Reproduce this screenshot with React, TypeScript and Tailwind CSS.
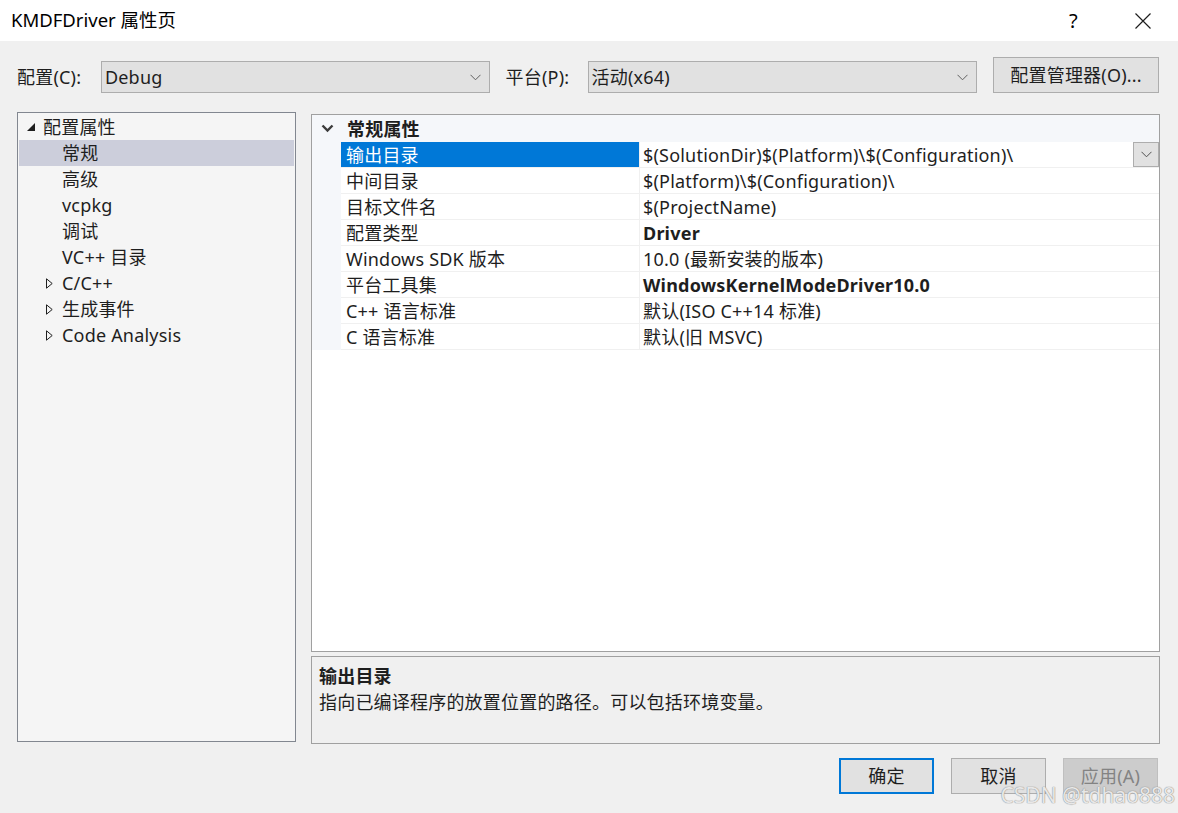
import * as React from "react";

const rows: [string, string, boolean][] = [
  ["输出目录", "$(SolutionDir)$(Platform)\\$(Configuration)\\", false],
  ["中间目录", "$(Platform)\\$(Configuration)\\", false],
  ["目标文件名", "$(ProjectName)", false],
  ["配置类型", "Driver", true],
  ["Windows SDK 版本", "10.0 (最新安装的版本)", false],
  ["平台工具集", "WindowsKernelModeDriver10.0", true],
  ["C++ 语言标准", "默认(ISO C++14 标准)", false],
  ["C 语言标准", "默认(旧 MSVC)", false],
];

const tree: { label: string; level: 0 | 1; mark?: "open" | "closed"; selected?: boolean }[] = [
  { label: "配置属性", level: 0, mark: "open" },
  { label: "常规", level: 1, selected: true },
  { label: "高级", level: 1 },
  { label: "vcpkg", level: 1 },
  { label: "调试", level: 1 },
  { label: "VC++ 目录", level: 1 },
  { label: "C/C++", level: 1, mark: "closed" },
  { label: "生成事件", level: 1, mark: "closed" },
  { label: "Code Analysis", level: 1, mark: "closed" },
];

function ComboChevron() {
  return (
    <svg width="11" height="7" viewBox="0 0 11 7" className="shrink-0">
      <path d="M0.5 0.8 L5.5 5.8 L10.5 0.8" fill="none" stroke="#606060" strokeWidth="1" />
    </svg>
  );
}

function Combo({ value, className }: { value: string; className: string }) {
  return (
    <div
      className={
        "flex h-[32px] items-center justify-between border border-[#adadad] bg-[#e1e1e1] pl-[3px] pr-[8px] " +
        className
      }
    >
      <span>{value}</span>
      <ComboChevron />
    </div>
  );
}

function TreeItem({ item }: { item: (typeof tree)[number] }) {
  return (
    <div
      className={
        "flex h-[26px] items-center " + (item.selected ? "bg-[#cccedb]" : "")
      }
    >
      {item.level === 0 ? (
        <>
          <span className="flex w-[24px] justify-end pr-[8px]">
            <svg width="8" height="8" viewBox="0 0 8 8">
              <path d="M8 0 L8 8 L0 8 Z" fill="#1e1e1e" />
            </svg>
          </span>
          <span>{item.label}</span>
        </>
      ) : (
        <>
          <span className="flex w-[43px] justify-end pr-[9px]">
            {item.mark === "closed" && (
              <svg width="7" height="11" viewBox="0 0 7 11">
                <path d="M0.5 0.8 L6.2 5.5 L0.5 10.2 Z" fill="none" stroke="#1e1e1e" strokeWidth="1" />
              </svg>
            )}
          </span>
          <span>{item.label}</span>
        </>
      )}
    </div>
  );
}

function DialogButton({
  label,
  kind,
}: {
  label: string;
  kind: "default" | "normal" | "disabled";
}) {
  const cls =
    kind === "default"
      ? "border-2 border-[#0078d7] bg-[#e1e1e1] text-[#1e1e1e]"
      : kind === "normal"
        ? "border border-[#adadad] bg-[#e1e1e1] text-[#1e1e1e]"
        : "border border-[#bfbfbf] bg-[#cccccc] text-[#838383]";
  return (
    <div className={"flex h-[36px] w-[95px] items-center justify-center " + cls}>
      {label}
    </div>
  );
}

export default function App() {
  return (
    <div className="relative flex h-[813px] w-[1178px] flex-col overflow-hidden bg-[#f0f0f0] font-['Noto_Sans','Noto_Sans_CJK_SC',sans-serif] text-[18px] leading-none tracking-[0.2px] text-[#1e1e1e]">
      {/* title bar */}
      <div className="flex h-[41px] shrink-0 items-center justify-between bg-white pl-[11px] pr-[27px]">
        <span className="text-[18.5px] tracking-normal text-black">KMDFDriver 属性页</span>
        <div className="flex items-center gap-[57px] text-black">
          <span className="text-[20px]">?</span>
          <svg width="16" height="16" viewBox="0 0 16 16">
            <path d="M0.5 0.5 L15.5 15.5 M15.5 0.5 L0.5 15.5" stroke="#1e1e1e" strokeWidth="1.2" />
          </svg>
        </div>
      </div>

      {/* configuration row */}
      <div className="flex items-end pl-[17px] pr-[19px] pt-[16px]">
        <div className="flex h-[32px] w-[84px] items-center">配置(C):</div>
        <Combo value="Debug" className="w-[389px]" />
        <div className="flex h-[32px] w-[98px] items-center pl-[16px]">平台(P):</div>
        <Combo value="活动(x64)" className="w-[390px]" />
        <div className="ml-[16px] flex h-[36px] w-[166px] items-center justify-center border border-[#adadad] bg-[#e1e1e1]">
          配置管理器(O)...
        </div>
      </div>

      {/* main panels */}
      <div className="mt-[19px] flex gap-[15px] pl-[17px] pr-[18px]">
        <div className="h-[630px] w-[279px] border border-[#828790] bg-[#f5f5f5] px-[1px] pt-[1px]">
          {tree.map((t) => (
            <TreeItem key={t.label} item={t} />
          ))}
        </div>

        <div className="mt-[2px] flex flex-1 flex-col">
          <div className="flex h-[538px] flex-col border border-[#a0a0a0] bg-white">
            <div className="flex h-[27px] shrink-0 items-center bg-[#f5f7fa]">
              <span className="flex w-[29px] justify-center pl-[2px]">
                <svg width="13" height="9" viewBox="0 0 13 9">
                  <path d="M1.5 1.5 L6.5 6.5 L11.5 1.5" fill="none" stroke="#3c3c3c" strokeWidth="2.4" />
                </svg>
              </span>
              <span className="pl-[6px] font-bold">常规属性</span>
            </div>
            {rows.map(([name, value, bold], i) => (
              <div key={name} className="flex h-[26px] shrink-0">
                <div className="w-[29px] shrink-0 bg-[#f5f7fa]" />
                <div
                  className={
                    "flex w-[298px] shrink-0 items-center border-b border-[#f0f0f0] pl-[5px] " +
                    (i === 0 ? "bg-[#0078d7] text-white" : "")
                  }
                >
                  {name}
                </div>
                <div className="w-[1px] shrink-0 bg-[#f0f0f0]" />
                <div
                  className={
                    "flex flex-1 items-center justify-between border-b border-[#f0f0f0] pl-[3px] " +
                    (bold ? "font-bold" : "")
                  }
                >
                  <span>{value}</span>
                  {i === 0 && (
                    <div className="flex h-[25px] w-[26px] items-center justify-center border border-[#adadad] bg-[#e1e1e1]">
                      <svg width="11" height="7" viewBox="0 0 11 7">
                        <path d="M0.5 0.8 L5.5 5.8 L10.5 0.8" fill="none" stroke="#505050" strokeWidth="1" />
                      </svg>
                    </div>
                  )}
                </div>
              </div>
            ))}
          </div>

          <div className="mt-[4px] flex h-[88px] flex-col border border-[#a0a0a0] bg-[#f0f0f0] px-[7px] pt-[6px]">
            <div className="flex h-[26px] items-center font-bold">输出目录</div>
            <div className="flex h-[26px] items-center">指向已编译程序的放置位置的路径。可以包括环境变量。</div>
          </div>
        </div>
      </div>

      {/* dialog buttons */}
      <div className="mt-[14px] flex justify-end gap-[17px] pr-[20px]">
        <DialogButton label="确定" kind="default" />
        <DialogButton label="取消" kind="normal" />
        <DialogButton label="应用(A)" kind="disabled" />
      </div>

      {/* watermark */}
      <div className="absolute bottom-[7px] right-[3px] text-[21px] tracking-normal text-white/80 [text-shadow:0_0_1px_#888,0_0_1px_#888]">
        CSDN @tdhao888
      </div>
    </div>
  );
}
